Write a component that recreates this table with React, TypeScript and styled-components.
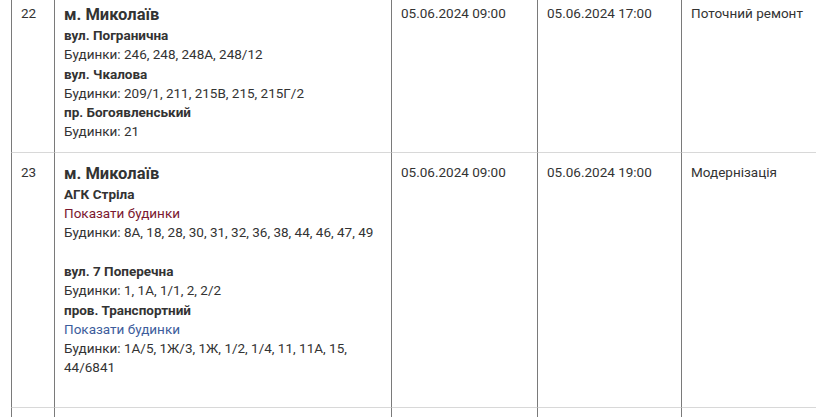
import React from "react";
import styled, { createGlobalStyle } from "styled-components";

const Global = createGlobalStyle`
  html, body { margin: 0; padding: 0; background: #fff; overflow: hidden; }
  body { font-family: Roboto, "Noto Sans", Arial, sans-serif; color: #333; }
`;

const Table = styled.table`
  border-collapse: separate;
  border-spacing: 0;
  table-layout: fixed;
  width: 820px;
  margin: -6px 0 0 11px;
  font-size: 13.5px;
  line-height: 19.3px;
`;

const Cell = styled.td<{ $w: number }>`
  width: ${(p) => p.$w}px;
  box-sizing: border-box;
  vertical-align: top;
  padding: 10px 10px 10px 9px;
  border-left: 1px solid #7a7a7a;
  border-bottom: 1px solid #d8d8d8;
  color: #333;
`;

const City = styled.div`
  font-size: 16.5px;
  font-weight: 700;
  line-height: 15px;
  margin: 3px 0 4px;
  color: #333;
`;

const StreetName = styled.div`
  font-weight: 700;
`;

const Group = styled.div<{ $gap: boolean }>`
  margin-bottom: ${(p) => (p.$gap ? "19.3px" : "0")};
`;

const Toggle = styled.a<{ $visited: boolean }>`
  display: block;
  text-decoration: none;
  color: ${(p) => (p.$visited ? "#7b1830" : "#3d5d9c")};
  cursor: pointer;
`;

const EmptyRow = styled.tr`
  height: 40px;
`;

type Street = { name: string; houses: string; toggle?: "visited" | "link" };
type Row = { n: number; city: string; streets: Street[]; start: string; end: string; kind: string };

const rows: Row[] = [
  {
    n: 22,
    city: "м. Миколаїв",
    streets: [
      { name: "вул. Погранична", houses: "246, 248, 248А, 248/12" },
      { name: "вул. Чкалова", houses: "209/1, 211, 215В, 215, 215Г/2" },
      { name: "пр. Богоявленський", houses: "21" },
    ],
    start: "05.06.2024 09:00",
    end: "05.06.2024 17:00",
    kind: "Поточний ремонт",
  },
  {
    n: 23,
    city: "м. Миколаїв",
    streets: [
      { name: "АГК Стріла", toggle: "visited", houses: "8А, 18, 28, 30, 31, 32, 36, 38, 44, 46, 47, 49" },
      { name: "вул. 7 Поперечна", houses: "1, 1А, 1/1, 2, 2/2" },
      { name: "пров. Транспортний", toggle: "link", houses: "1А/5, 1Ж/3, 1Ж, 1/2, 1/4, 11, 11А, 15, 44/6841" },
    ],
    start: "05.06.2024 09:00",
    end: "05.06.2024 19:00",
    kind: "Модернізація",
  },
];

const widths = [43, 337, 146, 144, 150];

export default function App() {
  return (
    <>
      <Global />
      <Table>
        <tbody>
          {rows.map((r) => (
            <tr key={r.n}>
              <Cell $w={widths[0]}>{r.n}</Cell>
              <Cell $w={widths[1]}>
                <City>{r.city}</City>
                {r.streets.map((s) => (
                  <Group key={s.name} $gap={!!s.toggle}>
                    <StreetName>{s.name}</StreetName>
                    {s.toggle && <Toggle $visited={s.toggle === "visited"}>Показати будинки</Toggle>}
                    <div>Будинки: {s.houses}</div>
                  </Group>
                ))}
              </Cell>
              <Cell $w={widths[2]}>{r.start}</Cell>
              <Cell $w={widths[3]}>{r.end}</Cell>
              <Cell $w={widths[4]}>{r.kind}</Cell>
            </tr>
          ))}
          <EmptyRow>
            {widths.map((w, i) => (
              <Cell key={i} $w={w} />
            ))}
          </EmptyRow>
        </tbody>
      </Table>
    </>
  );
}
